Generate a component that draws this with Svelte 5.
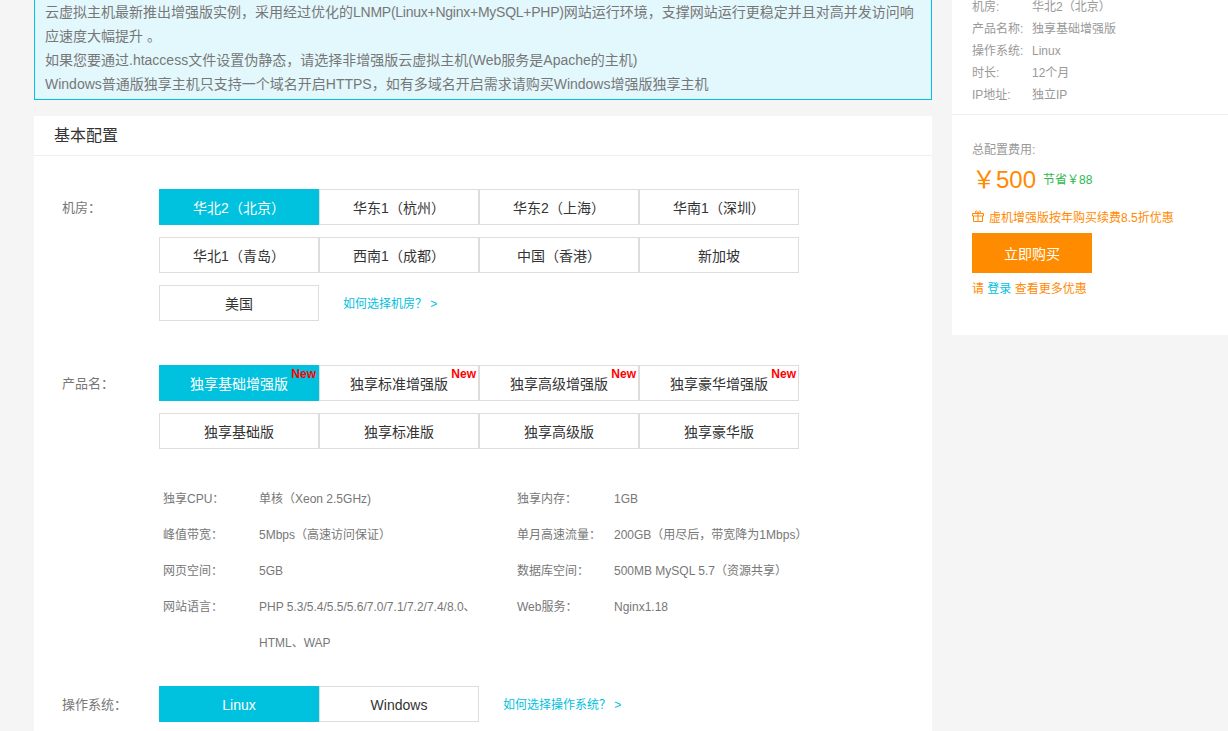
<script>
	const rooms = ["华北2（北京）", "华东1（杭州）", "华东2（上海）", "华南1（深圳）", "华北1（青岛）", "西南1（成都）", "中国（香港）", "新加坡", "美国"];
	const products = ["独享基础增强版", "独享标准增强版", "独享高级增强版", "独享豪华增强版", "独享基础版", "独享标准版", "独享高级版", "独享豪华版"];
	const specs = [
		["独享CPU：", "单核（Xeon 2.5GHz)", "独享内存：", "1GB"],
		["峰值带宽：", "5Mbps（高速访问保证）", "单月高速流量：", "200GB（用尽后，带宽降为1Mbps）"],
		["网页空间：", "5GB", "数据库空间：", "500MB MySQL 5.7（资源共享）"],
		["网站语言：", "PHP 5.3/5.4/5.5/5.6/7.0/7.1/7.2/7.4/8.0、", "Web服务：", "Nginx1.18"],
		["", "HTML、WAP", "", ""]
	];
	const summary = [
		["机房:", "华北2（北京）"],
		["产品名称:", "独享基础增强版"],
		["操作系统:", "Linux"],
		["时长:", "12个月"],
		["IP地址:", "独立IP"]
	];
</script>

<div class="page">
	<div class="main">
		<div class="notice">
			<p>云虚拟主机最新推出增强版实例，采用经过优化的<span class="tight">LNMP(Linux+Nginx+MySQL+PHP)</span>网站运行环境，支撑网站运行更稳定并且对高并发访问响<br />应速度大幅提升 。</p>
			<p>如果您要通过.htaccess文件设置伪静态，请选择非增强版云虚拟主机(Web服务是Apache的主机)</p>
			<p>Windows普通版独享主机只支持一个域名开启HTTPS，如有多域名开启需求请购买Windows增强版独享主机</p>
		</div>

		<div class="card">
			<div class="card-title">基本配置</div>
			<div class="card-body">
				<div class="row rooms">
					<div class="label">机房：</div>
					<div class="options">
						{#each rooms as room, i}
							<div class="opt" class:active={i === 0}>{room}</div>
						{/each}
						<a class="help" href="#top">如何选择机房？ &gt;</a>
					</div>
				</div>

				<div class="row">
					<div class="label">产品名：</div>
					<div class="options">
						{#each products as product, i}
							<div class="opt" class:active={i === 0}>
								{product}
								{#if i < 4}<span class="new">New</span>{/if}
							</div>
						{/each}
					</div>
				</div>

				<div class="specs">
					{#each specs as spec}
						<div class="spec-name">{spec[0]}</div>
						<div class="spec-value">{spec[1]}</div>
						<div class="spec-name">{spec[2]}</div>
						<div class="spec-value">{spec[3]}</div>
					{/each}
				</div>

				<div class="row">
					<div class="label">操作系统：</div>
					<div class="options">
						<div class="opt active">Linux</div>
						<div class="opt">Windows</div>
						<a class="help" href="#top">如何选择操作系统？ &gt;</a>
					</div>
				</div>
			</div>
		</div>
	</div>

	<div class="side">
		<div class="summary">
			{#each summary as item}
				<div class="sum-row">
					<span class="sum-key">{item[0]}</span>
					<span>{item[1]}</span>
				</div>
			{/each}
		</div>
		<div class="total">
			<div class="total-label">总配置费用:</div>
			<div class="price-line">
				<span class="price">￥500</span>
				<span class="save">节省￥88</span>
			</div>
			<div class="promo">
				<svg width="12" height="12" viewBox="0 0 12 12" fill="none" stroke="#ff8a00" stroke-width="1">
					<path d="M0.5 3.5h11v2.5h-11zM1.5 6v5.5h9V6M6 3.5v8M6 3.5C4 3.5 3 2.6 3.5 1.4 4.2.3 5.6 1.4 6 3.5 6.4 1.4 7.8.3 8.5 1.4 9 2.6 8 3.5 6 3.5z" />
				</svg>
				<span>虚机增强版按年购买续费8.5折优惠</span>
			</div>
			<button class="buy">立即购买</button>
			<div class="login">请 <a href="#top">登录</a> 查看更多优惠</div>
		</div>
	</div>
</div>

<style>
	:global(body) {
		margin: 0;
		background: #f5f5f5;
		overflow: hidden;
	}

	.page {
		display: flex;
		align-items: flex-start;
		gap: 20px;
		height: 731px;
		overflow: hidden;
		padding-left: 34px;
		font-family: "Liberation Sans", "Noto Sans CJK SC", sans-serif;
		font-size: 12px;
		color: #333;
	}

	.main {
		width: 898px;
		flex: none;
		margin-top: -9px;
	}

	.notice {
		box-sizing: border-box;
		height: 109px;
		padding: 8px 10px 0;
		background: #e3f8fd;
		border: 1px solid #00c1de;
		font-size: 14px;
		line-height: 24px;
		color: #777;
	}

	.notice p {
		margin: 0;
	}

	.tight {
		letter-spacing: -0.25px;
	}

	.card {
		margin-top: 16px;
		background: #fff;
		height: 700px;
	}

	.card-title {
		height: 39px;
		line-height: 39px;
		padding-left: 20px;
		font-size: 16px;
		color: #333;
		border-bottom: 1px solid #eee;
	}

	.card-body {
		padding: 33px 0 0 28px;
	}

	.row {
		display: flex;
		margin-bottom: 32px;
	}

	.row.rooms {
		margin-bottom: 44px;
	}

	.label {
		width: 97px;
		flex: none;
		font-size: 13px;
		line-height: 37px;
		color: #777;
	}

	.options {
		display: grid;
		grid-template-columns: repeat(4, 160px);
		row-gap: 12px;
		align-items: center;
	}

	.opt {
		position: relative;
		box-sizing: border-box;
		height: 36px;
		line-height: 37px;
		text-align: center;
		font-size: 14px;
		color: #333;
		background: #fff;
		border: 1px solid #ddd;
	}

	.opt.active {
		background: #00c1de;
		border-color: #00c1de;
		color: #fff;
	}

	.new {
		position: absolute;
		top: 2px;
		right: 2px;
		font-size: 12px;
		line-height: 12px;
		font-weight: bold;
		color: #ff0000;
	}

	.help {
		padding-left: 24px;
		margin-bottom: 2px;
		white-space: nowrap;
		color: #00c1de;
		text-decoration: none;
	}

	.specs {
		display: grid;
		grid-template-columns: 96px 258px 97px 1fr;
		grid-auto-rows: 36px;
		line-height: 36px;
		margin: -0.5px 0 25px 101px;
		color: #777;
	}

	.spec-value {
		white-space: nowrap;
	}

	.side {
		flex: 1;
		background: #fff;
		height: 335px;
	}

	.summary {
		box-sizing: border-box;
		padding: 0 20px;
		height: 119px;
		margin-top: -4px;
		border-bottom: 1px solid #eee;
		color: #999;
		line-height: 22px;
	}

	.sum-row {
		display: flex;
	}

	.sum-key {
		width: 60px;
		flex: none;
	}

	.total {
		padding: 26px 20px 0;
	}

	.total-label {
		line-height: 18px;
		color: #999;
	}

	.price-line {
		display: flex;
		align-items: center;
		height: 36px;
	}

	.price {
		font-size: 24px;
		color: #ff8a00;
		margin-right: 7px;
	}

	.save {
		color: #2db84d;
		margin-top: 3px;
	}

	.promo {
		display: flex;
		align-items: center;
		gap: 5px;
		height: 18px;
		margin-top: 12px;
		color: #ff8a00;
	}

	.buy {
		display: block;
		width: 120px;
		height: 40px;
		margin-top: 8px;
		border: none;
		background: #ff8c00;
		color: #fff;
		font: 14px "Liberation Sans", "Noto Sans CJK SC", sans-serif;
	}

	.login {
		margin-top: 7px;
		line-height: 18px;
		color: #ff8a00;
	}

	.login a {
		color: #00c1de;
		text-decoration: none;
	}
</style>
